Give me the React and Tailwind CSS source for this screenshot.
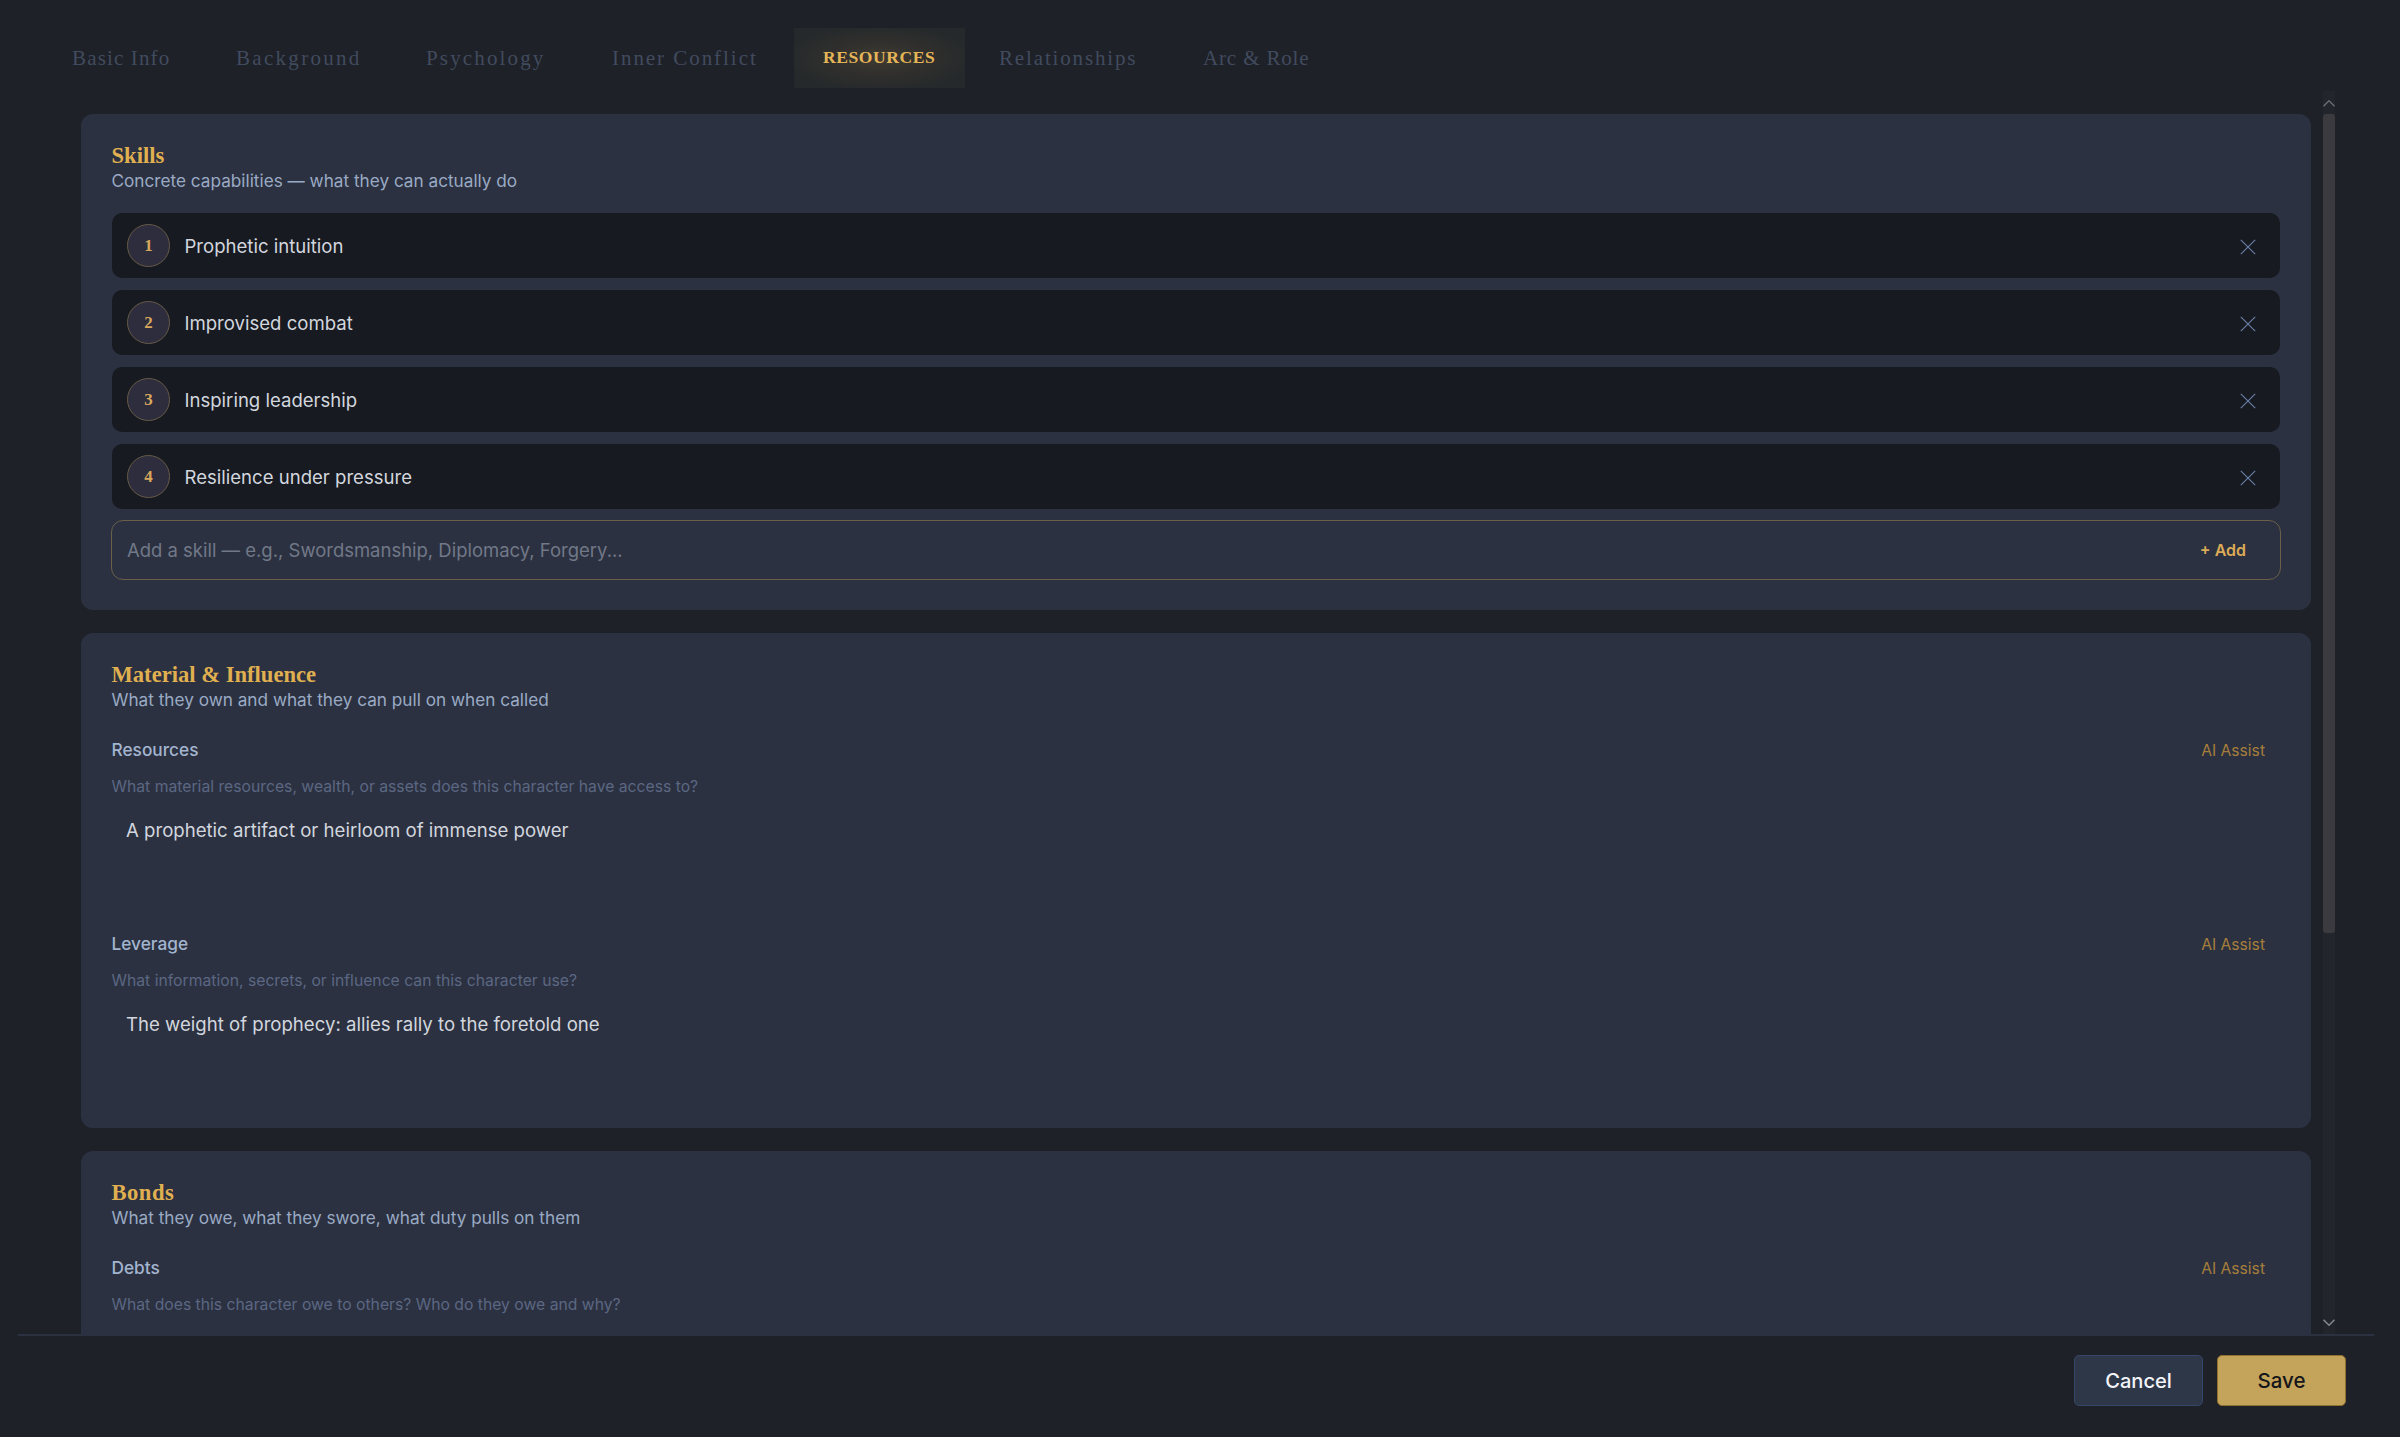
const tabs = [
  { label: "Basic Info", cls: "w-[159px] text-[21px] tracking-[1.15px]" },
  { label: "Background", cls: "w-[185px] text-[21px] tracking-[2.3px]" },
  { label: "Psychology", cls: "w-[181px] text-[21px] tracking-[2.15px]" },
  { label: "Inner Conflict", cls: "w-[206px] text-[21px] tracking-[1.95px]" },
  { label: "Resources", cls: "w-[171px] text-[17.5px] uppercase tracking-[0.6px]", active: true },
  { label: "Relationships", cls: "w-[199px] text-[21px] tracking-[1.85px]" },
  { label: "Arc & Role", cls: "w-[170px] text-[21px] tracking-[0.85px]" },
];

const skills = [
  "Prophetic intuition",
  "Improvised combat",
  "Inspiring leadership",
  "Resilience under pressure",
];

const serif = "font-['Liberation_Serif',serif]";

function Tab({ label, cls, active }) {
  const look = active
    ? "font-bold text-[#e5b558] bg-[radial-gradient(ellipse_at_center,#403b32_0%,#302f2d_40%,#25292b_80%)]"
    : "text-[#414b5e]";
  return (
    <button className={`h-[60px] shrink-0 pl-[29px] text-left leading-none whitespace-nowrap ${serif} ${cls} ${look}`}>
      {label}
    </button>
  );
}

function Card({ title, subtitle, titleCls = "", children }) {
  return (
    <section className="shrink-0 rounded-xl bg-[#2b3140] px-[30px] pt-7 pb-[30px]">
      <h2 className={`pl-[0.5px] text-[22.6px] leading-[27px] font-bold text-[#e0b050] ${serif} ${titleCls}`}>{title}</h2>
      <p className="-mt-px pb-px pl-[0.5px] text-[17.2px] leading-[25px] text-[#9aaac4]">{subtitle}</p>
      {children}
    </section>
  );
}

function SkillRow({ index, name }) {
  return (
    <li className="mx-px flex h-[65px] items-center rounded-[10px] bg-[#171a20] pr-6 pl-[15px]">
      <span className={`flex size-[43px] items-center justify-center rounded-full border border-[#675a47] bg-[#2d2d3e] text-[17px] font-bold text-[#d9a75c] ${serif}`}>
        {index}
      </span>
      <span className="mt-[2px] ml-[14.5px] text-[18.57px] text-[#d2d6de]">{name}</span>
      <button className="ml-auto text-[#6b80aa]" aria-label={`Remove ${name}`}>
        <svg viewBox="0 0 16 16" className="mt-[3px] size-4" fill="none" stroke="currentColor" strokeWidth="1.1">
          <path d="M0.8 0.8 15.2 15.2M15.2 0.8 0.8 15.2" />
        </svg>
      </button>
    </li>
  );
}

function Field({ label, hint, value, first }) {
  return (
    <div className={first ? "mt-[22px]" : "mt-[25px]"}>
      <div className="flex h-[30px] items-center justify-between pr-4 pl-[0.5px]">
        <span className="text-[17.3px] font-medium text-[#a3b4cf]">{label}</span>
        <button className="mt-px text-[15.65px] text-[#a67e3c]">AI Assist</button>
      </div>
      <p className="mt-[10px] pl-[0.5px] text-[15.73px] leading-6 text-[#5b6783]">{hint}</p>
      <div className="mt-[7px] h-[98px] px-[15px] pt-[10px] text-[18.6px] leading-7 text-[#d2d6de]">{value}</div>
    </div>
  );
}

function ChevronIcon({ d }) {
  return (
    <svg viewBox="0 0 12 7" className="block h-[7px] w-3 shrink-0" fill="none" stroke="currentColor" strokeWidth="1.4">
      <path d={d} />
    </svg>
  );
}

export default function App() {
  return (
    <div className="flex h-[1437px] w-[2400px] flex-col overflow-hidden bg-[#1e2128] font-['Inter',sans-serif]">
      <nav className="flex h-[91px] shrink-0 gap-[5px] pt-7 pl-[43px]">
        {tabs.map((t) => (
          <Tab key={t.label} {...t} />
        ))}
      </nav>

      <main className="flex min-h-0 flex-1 pl-[81px]">
        <div className="flex w-[2230px] flex-col gap-[23px] overflow-hidden pt-[23px]">
          <Card title="Skills" subtitle="Concrete capabilities — what they can actually do">
            <ul className="mt-[19px] flex flex-col gap-3">
              {skills.map((s, i) => (
                <SkillRow key={s} index={i + 1} name={s} />
              ))}
            </ul>
            <div className="mt-[11px] flex h-[60px] items-center justify-between rounded-xl border border-[#6a5f49] pr-[34px] pl-[15px]">
              <span className="mt-px text-[18.48px] text-[#717888]">Add a skill — e.g., Swordsmanship, Diplomacy, Forgery...</span>
              <button className="text-[16px] font-semibold text-[#dcab57]">+ Add</button>
            </div>
          </Card>

          <Card title="Material & Influence" subtitle="What they own and what they can pull on when called">
            <Field
              first
              label="Resources"
              hint="What material resources, wealth, or assets does this character have access to?"
              value="A prophetic artifact or heirloom of immense power"
            />
            <Field
              label="Leverage"
              hint="What information, secrets, or influence can this character use?"
              value="The weight of prophecy: allies rally to the foretold one"
            />
          </Card>

          <Card title="Bonds" titleCls="tracking-[0.5px]" subtitle="What they owe, what they swore, what duty pulls on them">
            <Field first label="Debts" hint="What does this character owe to others? Who do they owe and why?" value="" />
          </Card>
        </div>

        <div className="ml-3 flex w-3 flex-col items-center bg-[#22252b] text-[#6d6e71]">
          <div className="flex h-[23px] shrink-0 items-center justify-center pt-px">
            <ChevronIcon d="M0.5 6.3 6 0.8l5.5 5.5" />
          </div>
          <div className="h-[819px] w-3 shrink-0 rounded-[3px] bg-[#3b3b3f]" />
          <div className="mt-auto mb-2 text-[#8b8c8f]">
            <ChevronIcon d="M0.5 0.7 6 6.2 11.5 0.7" />
          </div>
        </div>
      </main>

      <footer className="mr-[26px] ml-[18px] flex h-[103px] shrink-0 justify-end gap-[14px] border-t-2 border-[#2b3141] pt-[19px] pr-7">
        <button className="h-[51px] w-[129px] rounded-[5px] border border-[#36456a] bg-[#2e3748] pt-[2px] text-[20.1px] font-medium text-[#f2f4f8]">Cancel</button>
        <button className="h-[51px] w-[129px] rounded-[5px] border border-[#8f7130] bg-[#c4a35a] pt-[2px] text-[20.5px] font-medium text-[#14161a]">Save</button>
      </footer>
    </div>
  );
}
